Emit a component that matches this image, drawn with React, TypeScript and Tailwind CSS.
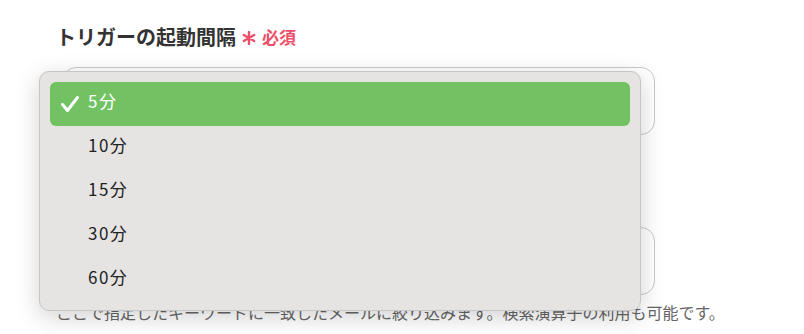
import { useState } from "react";

const options = ["5分", "10分", "15分", "30分", "60分"];

const Check = () => (
  <svg width="20" height="20" viewBox="0 0 20 20" fill="none">
    <path
      d="M2.5 10.5 L7.5 16.5 L17.5 3.5"
      stroke="white"
      strokeWidth="3"
      strokeLinecap="round"
      strokeLinejoin="round"
    />
  </svg>
);

const Asterisk = () => (
  <svg width="14" height="14" viewBox="0 0 14 14" fill="none">
    <path
      d="M7 1 V13 M1.8 4 L12.2 10 M1.8 10 L12.2 4"
      stroke="#ef4f6b"
      strokeWidth="2.4"
      strokeLinecap="round"
    />
  </svg>
);

const Dropdown = ({ selected }: { selected: string }) => {
  return (
    <div className="absolute left-[39px] top-[71px] w-[602px] rounded-[10px] border border-[#c6c6c6] bg-[#e5e4e3] px-[10px] pt-[10px] pb-[8px] shadow-[0_6px_24px_rgba(0,0,0,0.18)]">
      {options.map((opt) => {
        const active = opt === selected;
        return (
          <div
            key={opt}
            className={`flex h-[44px] items-center rounded-[6px] pl-[10px] pb-[6px] ${
              active ? "bg-[#72c264] text-white" : "text-[#222]"
            }`}
          >
            <span className="mt-[6px] w-[28px]">{active && <Check />}</span>
            <span className="text-[17px] tracking-[1.5px]">{opt}</span>
          </div>
        );
      })}
    </div>
  );
};

export default function App() {
  const [value] = useState("5分");
  return (
    <div
      className="relative h-[334px] w-[804px] overflow-hidden bg-white"
      style={{ fontFamily: '"Noto Sans CJK JP", "Noto Sans", sans-serif' }}
    >
      <div className="flex flex-col pl-[56px] pt-[23px]">
        <div className="flex h-[28px] items-center">
          <span className="text-[20px] font-bold text-[#333]">トリガーの起動間隔</span>
          <span className="ml-[6px] mt-[1px]">
            <Asterisk />
          </span>
          <span className="ml-[6px] text-[17px] font-bold text-[#ef4f6b]">必須</span>
        </div>
        <div className="mt-[16px] ml-[6px] h-[68px] w-[593px] rounded-[14px] border border-[#c9c9c9] bg-white" />
        <div className="mt-[92px] ml-[6px] h-[68px] w-[593px] rounded-[14px] border border-[#c9c9c9] bg-white" />
        <p className="mt-[6px] text-[16px] leading-[22px] text-[#666]">
          ここで指定したキーワードに一致したメールに絞り込みます。検索演算子の利用も可能です。
        </p>
      </div>
      <Dropdown selected={value} />
    </div>
  );
}
